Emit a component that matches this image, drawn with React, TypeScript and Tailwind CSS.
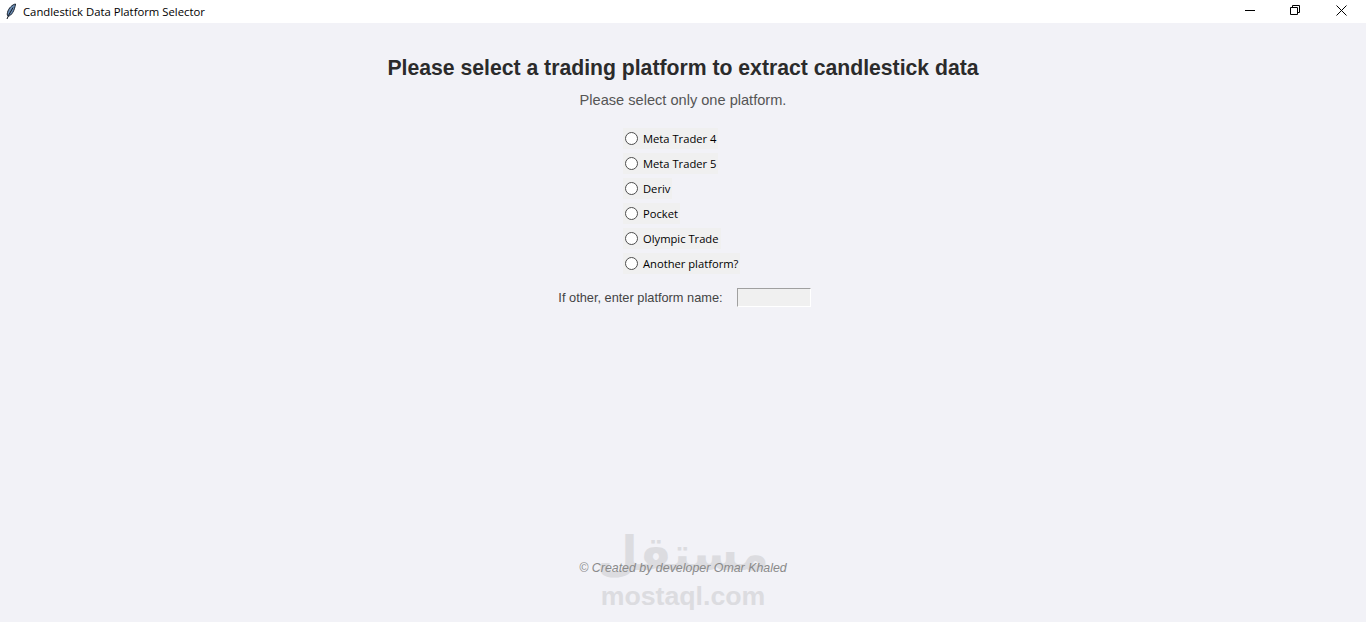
// App.tsx — Candlestick platform selector window

const platforms = ['Meta Trader 4', 'Meta Trader 5', 'Deriv', 'Pocket', 'Olympic Trade', 'Another platform?'];

function Feather() {
  return (
    <svg width="12" height="17" viewBox="0 0 12 17" fill="none">
      <path d="M10.5 1C7.5 1.5 3.5 5 2.5 9.5C2 11.5 2.3 12.8 3.3 13.2C6.5 12.5 9.5 8 10.5 1Z" fill="#6c8fb8" stroke="#16202c" strokeWidth="1" />
      <path d="M8 4.5L3.5 12.5L2 16" stroke="#10161f" strokeWidth="1" />
    </svg>
  );
}

export default function App() {
  return (
    <div className="relative flex h-[622px] w-[1366px] flex-col overflow-hidden bg-[#f2f2f7] font-['Liberation_Sans',sans-serif]">
      {/* Title bar */}
      <div className="flex h-[23px] shrink-0 items-center bg-white pl-[5px]">
        <Feather />
        <span className="ml-[6px] pt-px font-['Open_Sans',sans-serif] text-[11.3px] text-black">
          Candlestick Data Platform Selector
        </span>
        <div className="ml-auto flex h-full items-center pr-[2px] pb-[3px] text-black">
          <div className="flex w-[45px] justify-center">
            <svg width="10" height="10" viewBox="0 0 10 10" stroke="currentColor" fill="none">
              <path d="M0 5.5H10" />
            </svg>
          </div>
          <div className="flex w-[46px] justify-center">
            <svg width="10" height="10" viewBox="0 0 10 10" stroke="currentColor" fill="none">
              <path d="M0.5 2.5H7.5V9.5H0.5Z" />
              <path d="M2.5 2.5V0.5H9.5V7.5H7.5" />
            </svg>
          </div>
          <div className="flex w-[46px] justify-center">
            <svg width="11" height="11" viewBox="0 0 11 11" stroke="currentColor" fill="none">
              <path d="M0.5 0.5L10.5 10.5M10.5 0.5L0.5 10.5" />
            </svg>
          </div>
        </div>
      </div>

      {/* Content */}
      <div className="flex flex-1 flex-col items-center">
        <h1 className="mt-[31px] text-[21.2px] leading-[28px] font-bold text-[#2b2b2b]">
          Please select a trading platform to extract candlestick data
        </h1>
        <p className="mt-[10px] text-[14.6px] leading-[17px] text-[#555555]">Please select only one platform.</p>

        <div className="mt-[19px] flex w-[120px] flex-col items-start gap-[4px] self-center">
          {platforms.map((name) => (
            <div key={name} className="flex h-[21px] items-center bg-[#f0f0f0] px-[2px]">
              <span className="box-border h-[13px] w-[13px] rounded-full border border-[#4d4d4d] bg-white" />
              <span className="ml-[5px] pt-px font-['Open_Sans',sans-serif] text-[11.2px] whitespace-nowrap text-black">{name}</span>
            </div>
          ))}
        </div>

        <div className="mt-[13px] ml-[3px] flex items-center">
          <span className="pt-px text-[12.8px] text-[#444444]">If other, enter platform name:</span>
          <div className="ml-[14px] box-border h-[19px] w-[74px] border border-t-[#a0a0a0] border-r-white border-b-white border-l-[#a0a0a0] bg-[#f0f0f0]" />
        </div>
      </div>

      {/* Footer + watermark overlay */}
      <div className="absolute top-[527px] left-0 flex w-full flex-col items-center select-none">
        <div dir="rtl" lang="ar" className="h-[54px] font-['DejaVu_Sans',sans-serif] text-[47px] leading-[54px] font-bold text-[#dcdce0]">
          مستقل
        </div>
        <div className="text-[26.7px] leading-[30px] font-bold text-[#dcdce0]">mostaql.com</div>
      </div>
      <div className="absolute top-[561px] left-0 flex w-full justify-center text-[12.4px] leading-[15px] text-[#8a8a8a] italic">
        © Created by developer Omar Khaled
      </div>
    </div>
  );
}
